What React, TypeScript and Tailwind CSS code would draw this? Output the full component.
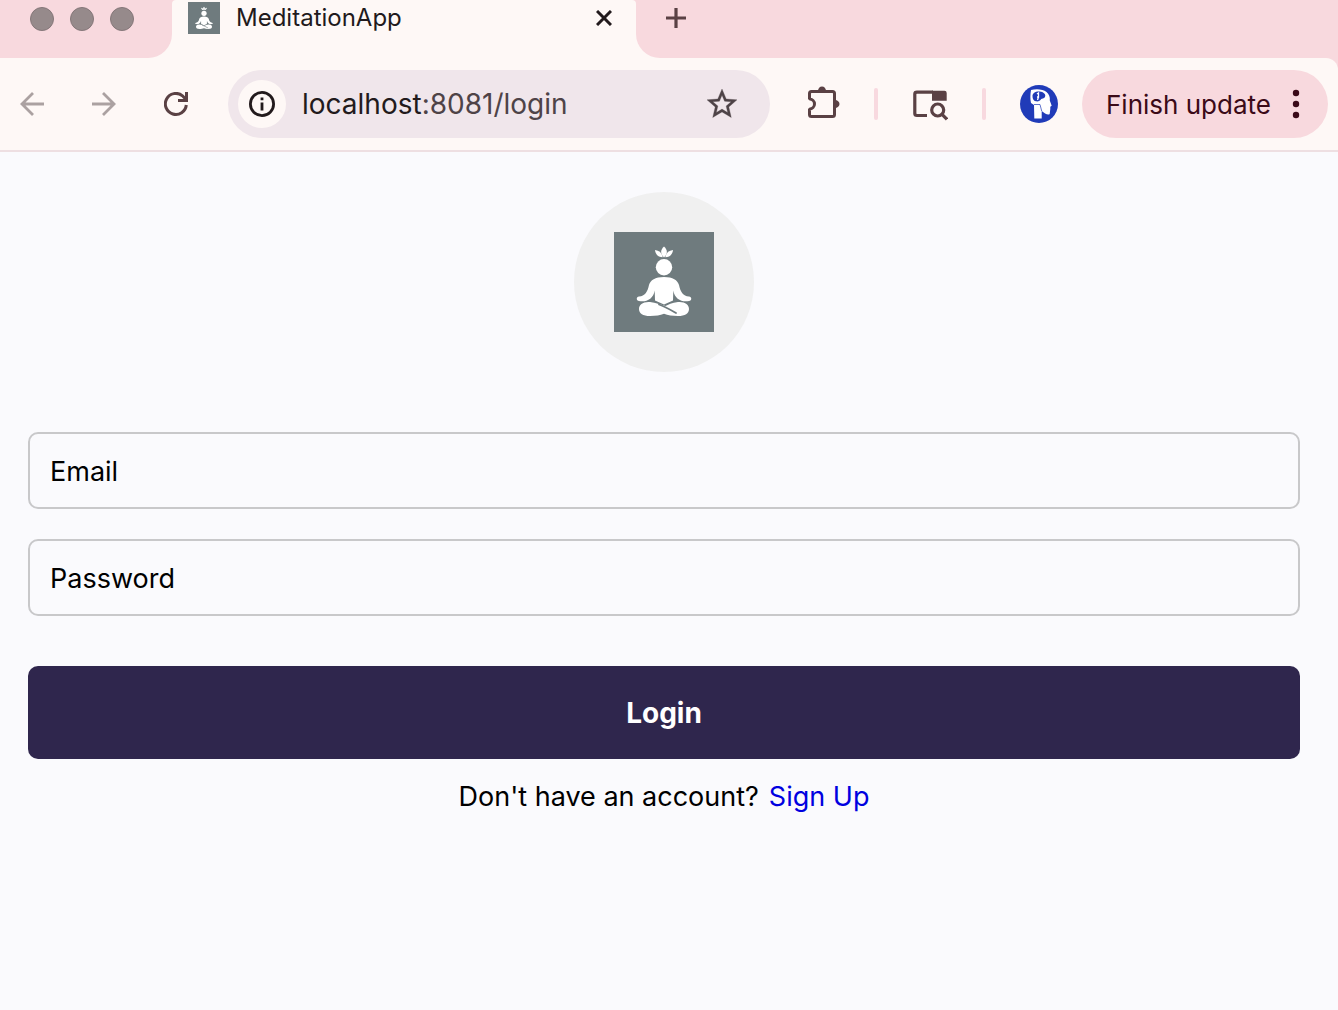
import React from "react";

function MeditationLogo({ className }: { className: string }) {
  return (
    <svg viewBox="0 0 100 100" className={className} role="img" aria-label="Meditation logo">
      <rect width="100" height="100" fill="#6f7b7e" />
      <g fill="#fff">
        <path d="M50 14.500C53.800 18 53.800 22 50 25.500C46.200 22 46.200 18 50 14.500Z" />
        <path d="M41 18C45.500 18.500 48 21 48.700 25.300C44.500 25.300 41.500 22.500 41 18Z" />
        <path d="M59 18C54.500 18.500 52 21 51.300 25.300C55.500 25.300 58.500 22.500 59 18Z" />
        <circle cx="50" cy="35.300" r="8.200" />
        <path d="M50 45C59 45 63.500 48 65 53C66.500 60 69 64 75 64.500C78 65 78 68.500 75 69C68 70.500 60.500 67 59.300 58.500L59 68.500L50 72.500L41 68.500L40.700 58.500C39.500 67 32 70.500 25 69C22 68.500 22 65 25 64.500C31 64 33.500 60 35 53C36.500 48 41 45 50 45Z" />
        <path d="M36 70C29 69.500 25 72.500 25 77C25 81.500 29 84 36 84C42 84 46 83.300 50 81.800C54 83.300 58 84 64 84C71 84 75 81.500 75 77C75 72.500 71 69.500 64 70C58 70.500 54 73 51.500 74C46 72.500 42 70.500 36 70Z" />
      </g>
      <path d="M45 72.500C51 74.500 56 77.500 62 81" fill="none" stroke="#6f7b7e" strokeWidth="1.800" strokeLinecap="round" />
    </svg>
  );
}

function ArrowIcon({ flipped }: { flipped?: boolean }) {
  return (
    <svg viewBox="0 0 24 24" className={flipped ? "size-6 rotate-180" : "size-6"} fill="none" stroke="#aba1a1" strokeWidth="2.800">
      <path d="M24 12H2.500M13 1L2 12L13 23" />
    </svg>
  );
}

function ReloadIcon() {
  return (
    <svg viewBox="0 0 24 24" className="size-6" fill="none" stroke="#5a4144" strokeWidth="3">
      <path d="M22.300 13A10.500 10.500 0 1 1 18.500 3.800L22 7.500" />
      <path d="M22.500 0V8.500H14" />
    </svg>
  );
}

function InfoIcon() {
  return (
    <svg viewBox="0 0 26 26" className="size-[26px]" fill="none" stroke="#221a1c">
      <circle cx="13" cy="13" r="11.600" strokeWidth="2.800" />
      <path d="M13 11.500V19.500M13 6.500V9.200" strokeWidth="2.800" />
    </svg>
  );
}

function StarIcon() {
  return (
    <svg viewBox="0 0 24 24" className="size-9" fill="#4e4347" stroke="#4e4347" strokeWidth="0.200">
      <path d="M22 9.240l-7.190-.620L12 2 9.190 8.630 2 9.240l5.460 4.730L5.820 21 12 17.270 18.180 21l-1.630-7.030L22 9.240zM12 15.400l-3.760 2.270 1-4.280-3.320-2.880 4.380-.380L12 6.100l1.710 4.040 4.380.380-3.320 2.880 1 4.280L12 15.400z" />
    </svg>
  );
}

function PuzzleIcon() {
  return (
    <svg viewBox="0 0 32 36" className="h-9 w-8">
      <path
        d="M1.500 13V7.500Q1.500 5.500 3.500 5.500H24.500Q26.500 5.500 26.500 7.500V28.500Q26.500 30.500 24.500 30.500H3.500Q1.500 30.500 1.500 28.500V23A5 5 0 0 0 1.500 13Z"
        fill="none"
        stroke="#5a4144"
        strokeWidth="3"
        strokeLinejoin="bevel"
      />
      <path d="M0 14.500A3.500 3.500 0 0 1 0 21.500Z" fill="#fef8f6" />
      <path d="M10 5A4 4.500 0 0 1 18 5ZM27 14A4.500 4 0 0 1 27 22Z" fill="#5a4144" />
    </svg>
  );
}

function TabSearchIcon() {
  return (
    <svg viewBox="0 0 36 36" className="size-9" fill="none" stroke="#5a4144" strokeWidth="3.200">
      <path d="M15 29.500H5Q2.800 29.500 2.800 27.500V8Q2.800 6.200 5 6.200H21" />
      <path d="M20 4.700H32.500Q34.700 4.700 34.700 7V14.700H20Z" fill="#5a4144" stroke="none" />
      <circle cx="25.700" cy="24" r="6" />
      <path d="M30 28.300L35 33.300" />
    </svg>
  );
}

function ProfileIcon() {
  return (
    <svg viewBox="0 0 38 38" className="size-[38px]">
      <circle cx="19" cy="19" r="19" fill="#203bb8" />
      <path
        d="M11 5C16 3.800 23 4 26.500 7C29 9.200 30.200 12 29.800 15.500L31.700 20.800L30.300 21.800V24L29.700 29C28 30.500 24.500 28.500 21.700 26V33.500H14.300L14 20L11 18C10 14 10.300 9 11 5Z"
        fill="#fff"
      />
      <path d="M12.500 11C12.500 8.300 15 6.500 18.500 6.500C22 6.500 25 8 25.300 10.500C25.300 12.700 23.500 13.500 21.200 14C20.300 16 18 16.800 15.800 16.300C13.500 15.800 12.500 14 12.500 11Z" fill="#203bb8" />
      <path d="M17 9L18.500 8V12H17M18.500 12L17.500 15" fill="none" stroke="#fff" strokeWidth="1.300" />
      <path d="M14 19.500H20L21.700 26" fill="none" stroke="#203bb8" strokeWidth="0.700" />
    </svg>
  );
}

function Separator() {
  return <span className="h-8 w-1 shrink-0 rounded-full bg-[#f8d9df]" />;
}

function TabStrip() {
  return (
    <div className="flex h-[58px] bg-[#fef8f6]">
      <div className="flex w-[172px] shrink-0 gap-4 rounded-br-3xl bg-[#f8d9de] pt-[7px] pl-[30px]">
        {["Close window", "Minimize window", "Zoom window"].map((label) => (
          <button key={label} aria-label={label} className="size-6 rounded-full border border-[#857779] bg-[#968a8b]" />
        ))}
      </div>
      <div className="w-[464px] bg-linear-to-b from-[#f8d9de] from-50% to-[#fef8f6] to-50%">
        <div className="h-full rounded-t-[4px] bg-[#fef8f6]">
          <div className="flex h-9 items-center pr-5 pl-4">
            <MeditationLogo className="size-8" />
            <span className="ml-4 flex-1 text-2xl text-[#221a1c]">MeditationApp</span>
            <button aria-label="Close tab" className="flex size-6 items-center justify-center">
              <svg viewBox="0 0 16 16" className="size-4" fill="none" stroke="#221a1c" strokeWidth="3">
                <path d="M1 1L15 15M15 1L1 15" />
              </svg>
            </button>
          </div>
        </div>
      </div>
      <div className="flex-1 rounded-bl-3xl bg-[#f8d9de] pl-7">
        <button aria-label="New tab" className="flex h-9 w-6 items-center justify-center">
          <svg viewBox="0 0 20 20" className="size-5" fill="none" stroke="#5a4144" strokeWidth="3.200">
            <path d="M10 0V20M0 10H20" />
          </svg>
        </button>
      </div>
    </div>
  );
}

function Toolbar() {
  return (
    <div className="bg-[#f8d9de]">
      <div className="flex h-[94px] items-center rounded-tr-xl border-b-2 border-[#eedfe2] bg-[#fef8f6] pr-[10px] pl-5">
        <div className="flex gap-12">
          <button aria-label="Back"><ArrowIcon /></button>
          <button aria-label="Forward"><ArrowIcon flipped /></button>
          <button aria-label="Reload"><ReloadIcon /></button>
        </div>
        <div className="ml-10 flex h-[68px] flex-1 items-center rounded-full bg-[#f0e6eb] pr-[30px] pl-[10px]">
          <button aria-label="Site information" className="flex size-12 items-center justify-center rounded-full bg-[#fef8f6]">
            <InfoIcon />
          </button>
          <span className="ml-4 flex-1 text-[28px] text-[#4e4347]">
            <span className="text-[#221a1c]">localhost</span>:8081/login
          </span>
          <button aria-label="Bookmark this page"><StarIcon /></button>
        </div>
        <div className="ml-[38px] flex items-center gap-[34px]">
          <button aria-label="Extensions"><PuzzleIcon /></button>
          <Separator />
          <button aria-label="Search tabs"><TabSearchIcon /></button>
          <Separator />
          <button aria-label="Profile"><ProfileIcon /></button>
        </div>
        <button className="ml-6 flex h-[68px] w-[246px] items-center justify-between rounded-full bg-[#f8d9de] pr-7 pl-6 text-[26px] whitespace-nowrap text-[#3b0a18]">
          Finish update
          <svg viewBox="0 0 8 30" className="h-[30px] w-2" fill="#3b0a18">
            <circle cx="4" cy="4" r="3.200" />
            <circle cx="4" cy="15" r="3.200" />
            <circle cx="4" cy="26" r="3.200" />
          </svg>
        </button>
      </div>
    </div>
  );
}

const fieldClass =
  "h-[77px] w-full rounded-[10px] border-2 border-[#c8c8ca] bg-transparent px-5 pt-[2px] text-[27px] text-black placeholder:text-black placeholder:opacity-100";

export default function App() {
  return (
    <div className="flex min-h-screen flex-col bg-[#fafafd] font-['Inter','Liberation_Sans',sans-serif]">
      <header>
        <TabStrip />
        <Toolbar />
      </header>
      <main className="flex flex-1 flex-col items-center pt-10 pr-[38px] pl-7">
        <div className="flex size-[180px] items-center justify-center rounded-full bg-[#f0f0f0]">
          <MeditationLogo className="size-[100px]" />
        </div>
        <form className="mt-[60px] flex w-full flex-col" onSubmit={(event) => event.preventDefault()}>
          <input type="email" aria-label="Email" placeholder="Email" className={fieldClass} />
          <input type="password" aria-label="Password" placeholder="Password" className={`${fieldClass} mt-[30px]`} />
          <button type="submit" className="mt-[50px] h-[93px] rounded-[10px] bg-[#2f264d] text-[28px] font-bold text-white">
            Login
          </button>
        </form>
        <p className="mt-[18px] flex gap-[10px] text-[27px] leading-10 text-black">
          Don't have an account?
          <a href="#signup" className="text-[#0000e0]">Sign Up</a>
        </p>
      </main>
    </div>
  );
}
